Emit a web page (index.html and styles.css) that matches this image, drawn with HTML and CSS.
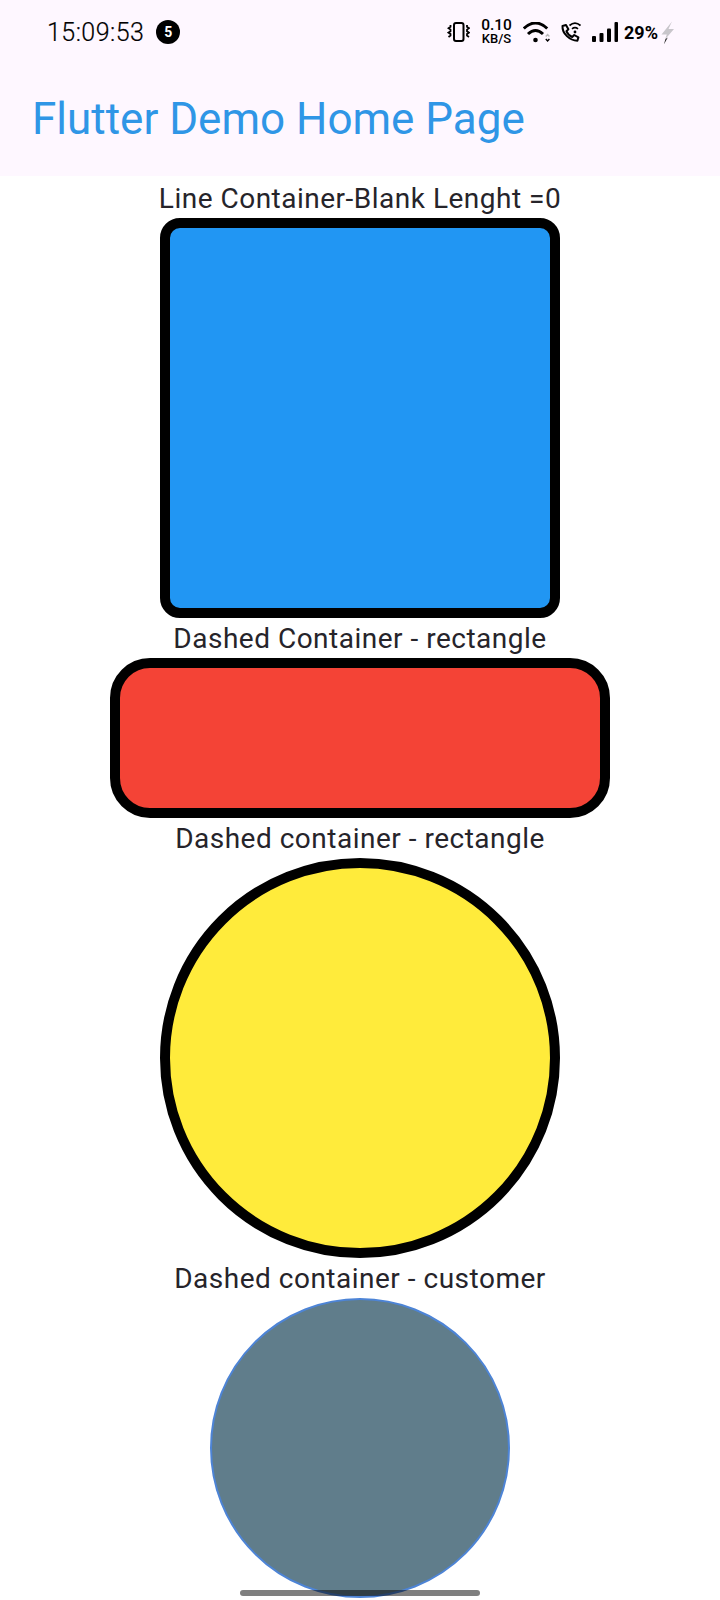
FILE: index.html
```html
<!DOCTYPE html>
<html lang="en">
<head>
<meta charset="utf-8">
<title>Flutter Demo Home Page</title>
<link rel="stylesheet" href="styles.css">
</head>
<body>
<div class="screen">
  <header class="appbar">
    <div class="status">
      <div class="status-left">
        <span class="clock">15:09:53</span>
        <span class="badge">5</span>
      </div>
      <div class="status-right">
        <svg class="ic-vib" viewBox="0 0 23 20" aria-hidden="true">
          <rect x="7" y="1" width="9.500" height="18" rx="2" fill="none" stroke="#000" stroke-width="2"/>
          <path d="M3.500 3v1.800l-2 1.400 2 1.400v1.600l-2 1.400 2 1.400v1.600l-2 1.400 M20 3v1.800l2 1.400-2 1.400v1.600l2 1.400-2 1.400v1.600l2 1.400" fill="none" stroke="#000" stroke-width="1.800"/>
        </svg>
        <div class="speed"><span class="speed-num">0.10</span><span class="speed-unit">KB/S</span></div>
        <svg class="ic-wifi" viewBox="0 0 27 21" aria-hidden="true">
          <path d="M.8 6.500Q12.500-4.500 24.200 6.500" fill="none" stroke="#000" stroke-width="3"/>
          <path d="M5 12Q12.500 5 20 12" fill="none" stroke="#000" stroke-width="3"/>
          <circle cx="12.500" cy="18" r="2.300" fill="#000"/>
          <path d="M22.800 14.500l1.800-2 1.800 2" fill="none" stroke="#bbb" stroke-width="1.400"/>
          <path d="M22.800 17l1.800 2 1.800-2" fill="none" stroke="#000" stroke-width="1.400"/>
        </svg>
        <svg class="ic-call" viewBox="0 0 21 20" aria-hidden="true">
          <path d="M2.500 4l3.500-1 2.400 4.300-2 1.900c1 2.500 3 4.500 5.800 5.800l2-2 4.200 2.400-1 3.400C9.800 18.600 2 11.500 2.500 4z" fill="none" stroke="#000" stroke-width="2" stroke-linejoin="round"/>
          <path d="M9.500 3.500c3.500-3 7.500-3 11 0" fill="none" stroke="#000" stroke-width="1.700"/>
          <path d="M12 6.800c2-1.600 4-1.600 6 0" fill="none" stroke="#000" stroke-width="1.700"/>
          <circle cx="15" cy="10" r="1.400" fill="#000"/>
        </svg>
        <svg class="ic-signal" viewBox="0 0 26 20" aria-hidden="true">
          <rect x="0" y="14" width="4" height="6" rx="1"/>
          <rect x="7.500" y="11" width="4" height="9" rx="1"/>
          <rect x="15" y="6.500" width="4" height="13.500" rx="1"/>
          <rect x="22.500" y="0" width="3.500" height="20" rx="1"/>
        </svg>
        <span class="battery">29%</span>
        <svg class="ic-bolt" viewBox="0 0 14 23" aria-hidden="true">
          <path d="M11 .5L.5 13.500h5.300L4 18.500 13 8H7.500z" fill="#c8c6cb"/>
          <path d="M4.500 18L2.800 23.500 6.800 16.500z" fill="#222"/>
        </svg>
      </div>
    </div>
    <h1 class="title">Flutter Demo Home Page</h1>
  </header>
  <main class="content">
    <p class="label">Line Container-Blank Lenght =0</p>
    <div class="shape square"></div>
    <p class="label">Dashed Container - rectangle</p>
    <div class="shape wide"></div>
    <p class="label">Dashed container - rectangle</p>
    <div class="shape circle"></div>
    <p class="label">Dashed container - customer</p>
    <div class="shape custom"></div>
  </main>
  <div class="handle"></div>
</div>
</body>
</html>
```
FILE: styles.css
```css
* { box-sizing: border-box; }
html, body { margin: 0; padding: 0; background: #fff; }
.screen {
  position: relative;
  width: 720px;
  height: 1600px;
  overflow: hidden;
  font-family: Roboto, "Noto Sans", sans-serif;
}
.appbar { height: 176px; background: #fef7ff; }
.status {
  height: 64px;
  display: flex;
  justify-content: space-between;
  align-items: center;
  padding: 0 45px 0 47px;
  color: #000;
}
.status-left { display: flex; align-items: center; gap: 12px; }
.clock { font-size: 25px; letter-spacing: 0.45px; font-weight: 300; -webkit-text-stroke: 0.2px #000; }
.badge {
  width: 24px;
  height: 24px;
  border-radius: 50%;
  background: #000;
  color: #fff;
  font-size: 14px;
  font-weight: 700;
  display: flex;
  align-items: center;
  justify-content: center;
}
.status-right { display: flex; align-items: center; }
.status-right svg { display: block; }
.ic-vib { width: 23px; height: 20px; margin-right: 11px; }
.speed { width: 31px; display: flex; flex-direction: column; align-items: center; margin-right: 11px; }
.speed-num { font-size: 15.5px; font-weight: 500; height: 13px; line-height: 13px; }
.speed-unit { font-size: 13px; font-weight: 500; height: 12px; line-height: 12px; margin-top: 1px; }
.ic-wifi { width: 27px; height: 21px; margin-right: 10px; }
.ic-call { width: 21px; height: 20px; margin-right: 11px; }
.ic-signal { width: 26px; height: 20px; margin-right: 6px; }
.battery { font-size: 18px; font-weight: 700; width: 37px; }
.ic-bolt { width: 14px; height: 23px; }
.title {
  margin: 0;
  height: 112px;
  padding-left: 32px;
  font-size: 44px;
  font-weight: 400;
  line-height: 110px;
  color: #2f96e6;
}
.content { display: flex; flex-direction: column; align-items: center; }
.label {
  margin: 0;
  height: 40px;
  padding-top: 2px;
  font-size: 28px;
  line-height: 38px;
  letter-spacing: 0.5px;
  color: #26242a;
  white-space: nowrap;
}
.content .label:first-child { height: 42px; padding-top: 4px; }
.shape { flex: none; }
.square { width: 400px; height: 400px; background: #2196f3; border: 10px solid #000; border-radius: 20px; }
.wide { width: 500px; height: 160px; background: #f44336; border: 10px solid #000; border-radius: 40px; }
.circle { width: 400px; height: 400px; background: #ffeb3b; border: 10px solid #000; border-radius: 50%; }
.custom { width: 300px; height: 300px; background: #607d8b; border: 2px solid #4d84d6; border-radius: 50%; }
.handle {
  position: absolute;
  left: 240px;
  top: 1590px;
  width: 240px;
  height: 6px;
  border-radius: 3px;
  background: rgba(0, 0, 0, 0.5);
}
```
